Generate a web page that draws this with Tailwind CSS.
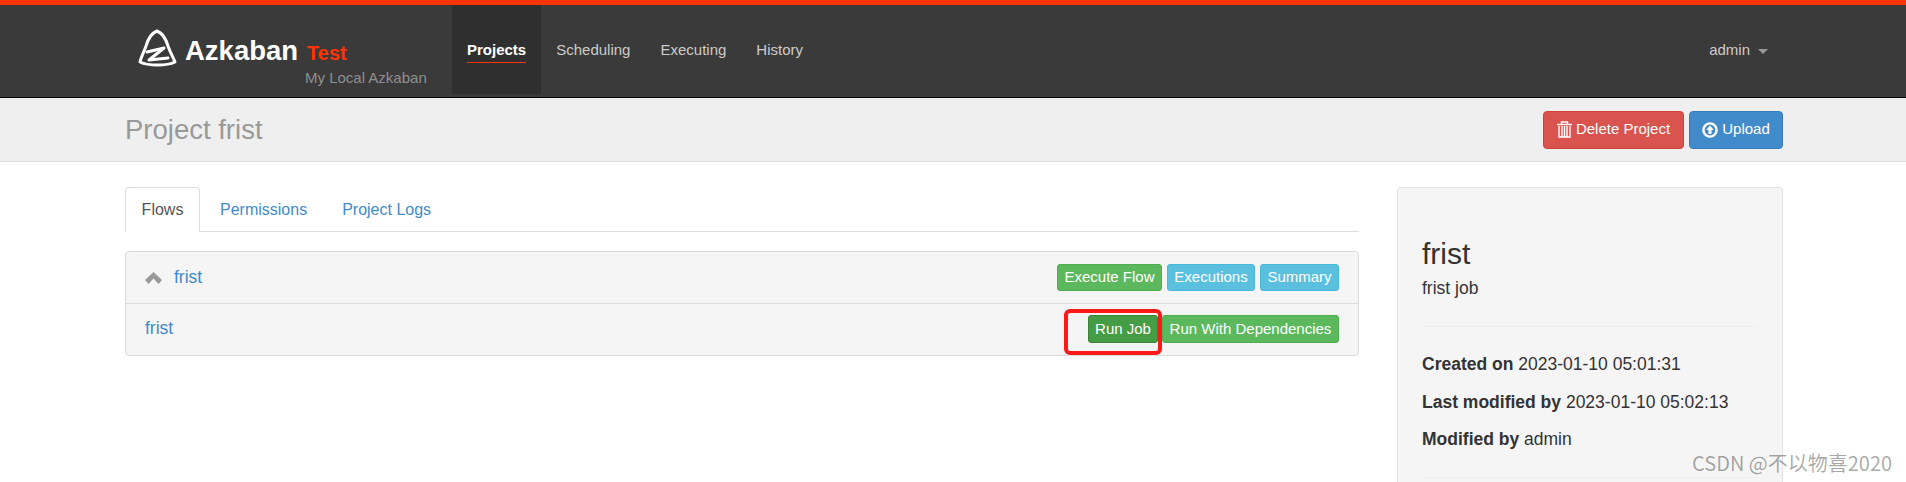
<!DOCTYPE html>
<html lang="en">
    <head>
        <title>Azkaban</title>
        <meta charset="UTF-8" />
        <script src="https://cdn.jsdelivr.net/npm/@tailwindcss/browser@4"></script>
    </head>
    <body class="relative h-[482px] overflow-hidden bg-white font-['Liberation_Sans',Arial,sans-serif] text-[17.5px] text-[#333]">
        <!-- top nav -->
        <header class="h-[98px] border-t-[5px] border-b border-t-[#ff3402] border-b-black bg-[#3a3a3a]">
            <div class="flex h-full pl-[125px] pr-[138px]">
                <div class="flex w-[327px] shrink-0">
                    <svg class="ml-[12px] mt-[24px] h-[38px] w-[40px]" viewBox="0 0 40 38" fill="none" stroke="#fff" stroke-width="3" stroke-linejoin="round" stroke-linecap="round">
                        <path d="M20 2C15 4 11 10 9 17C7 23 4 28 3 33C11 37 30 37 38 33C36 28 33 23 31 17C29 10 25 4 20 2Z" />
                        <path d="M10 23L27 19L12 31L31 29" />
                    </svg>
                    <div class="ml-[8px]">
                        <div class="mt-[28px] flex items-baseline">
                            <span class="text-[27.5px] leading-[36px] font-bold text-white">Azkaban</span>
                            <span class="ml-[9px] text-[20px] leading-[36px] font-bold text-[#ff3402]">Test</span>
                        </div>
                        <div class="ml-[120px] mt-[-2px] text-[15px] leading-[18px] whitespace-nowrap text-[#8f8f8f]">My Local Azkaban</div>
                    </div>
                </div>
                <nav class="flex h-[89px] text-[15px] text-[#ccc]">
                    <a class="bg-[#2f2f2f] px-[15px] pt-[35px] font-bold text-white">
                        <span class="block border-b border-[#ff3402] pb-[2px] leading-[20px]">Projects</span>
                    </a>
                    <a class="px-[15px] pt-[35px] leading-[20px]">Scheduling</a>
                    <a class="px-[15px] pt-[35px] leading-[20px]">Executing</a>
                    <a class="px-[15px] pt-[35px] leading-[20px]">History</a>
                </nav>
                <div class="ml-auto flex h-[91px] items-center text-[15px] text-[#ccc]">
                    admin
                    <span class="ml-[8px] mt-[1px] border-x-[5px] border-t-[5px] border-x-transparent border-t-[#999]"></span>
                </div>
            </div>
        </header>

        <!-- project header -->
        <div class="flex h-[64px] items-center justify-between border-b border-[#ddd] bg-[#efefef] pl-[125px] pr-[123px]">
            <h1 class="text-[27.5px] text-[#999]">Project frist</h1>
            <div class="flex gap-[5px] text-[15px] text-white">
                <button class="flex h-[38px] w-[141px] items-center justify-center gap-[4px] rounded border border-[#d43f3a] bg-[#d9534f]">
                    <svg class="h-[17px] w-[15px]" viewBox="0 0 15 17" fill="none" stroke="#fff">
                        <path d="M0 3.5H15M4.5 3V1H10.5V3" stroke-width="1.4" />
                        <path d="M2 5V16H13V5" stroke-width="1.4" />
                        <path d="M5 5V16M7.5 5V16M10 5V16" stroke-width="1.4" />
                    </svg>
                    Delete Project
                </button>
                <button class="flex h-[38px] w-[94px] items-center justify-center gap-[4px] rounded border border-[#357ebd] bg-[#428bca]">
                    <svg class="h-[16px] w-[16px]" viewBox="0 0 16 16">
                        <circle cx="8" cy="8" r="6.6" fill="none" stroke="#fff" stroke-width="2.4" />
                        <path d="M8 3.4L11.8 8H9.5V12H6.5V8H4.2Z" fill="#fff" />
                    </svg>
                    Upload
                </button>
            </div>
        </div>

        <!-- content -->
        <main class="flex gap-[38px] pl-[125px] pr-[123px] pt-[25px]">
            <div class="w-[1234px] shrink-0">
                <div class="flex h-[45px] border-b border-[#ddd] text-[16px] text-[#428bca]">
                    <a class="h-[45px] w-[75px] rounded-t border border-b-0 border-[#ddd] bg-white pt-[12px] text-center leading-[20px] text-[#555]">Flows</a>
                    <a class="ml-[20px] pt-[13px] leading-[20px]">Permissions</a>
                    <a class="ml-[35px] pt-[13px] leading-[20px]">Project Logs</a>
                </div>
                <div class="mt-[19px] h-[105px] rounded border border-[#ddd] bg-[#f5f5f5]">
                    <div class="flex h-[52px] items-center border-b border-[#ddd] pl-[19px] pr-[19px]">
                        <svg class="h-[12px] w-[17px]" viewBox="0 0 17 12" fill="#999">
                            <path d="M8.5 0L17 8L13.5 12L8.5 6.5L3.5 12L0 8Z" />
                        </svg>
                        <a class="ml-[12px] text-[#428bca]">frist</a>
                        <div class="ml-auto flex gap-[5px] text-[15px] text-white">
                            <button class="h-[27px] w-[105px] rounded-[3px] border border-[#4cae4c] bg-[#5cb85c]">Execute Flow</button>
                            <button class="h-[27px] w-[88px] rounded-[3px] border border-[#46b8da] bg-[#5bc0de]">Executions</button>
                            <button class="h-[27px] w-[79px] rounded-[3px] border border-[#46b8da] bg-[#5bc0de]">Summary</button>
                        </div>
                    </div>
                    <div class="flex h-[51px] items-center pl-[19px] pr-[19px]">
                        <a class="-mt-[2px] text-[#428bca]">frist</a>
                        <div class="ml-auto -mt-[1px] flex gap-[4px] text-[15px] text-white">
                            <button class="h-[28px] w-[70px] rounded-[3px] border border-[#398439] bg-[#449d44]">Run Job</button>
                            <button class="h-[28px] w-[177px] rounded-[3px] border border-[#4cae4c] bg-[#5cb85c]">Run With Dependencies</button>
                        </div>
                    </div>
                </div>
            </div>

            <aside class="h-[400px] w-[386px] shrink-0 rounded border border-[#e3e3e3] bg-[#f5f5f5] px-[24px] pt-[48px]">
                <h3 class="text-[30px] leading-[36px]">frist</h3>
                <p class="mt-[4px] leading-[24px]">frist job</p>
                <hr class="mt-[26px] border-[#eee]" />
                <p class="mt-[25px] leading-[24px]"><b>Created on</b> 2023-01-10 05:01:31</p>
                <p class="mt-[14px] leading-[24px]"><b>Last modified by</b> 2023-01-10 05:02:13</p>
                <p class="mt-[13px] leading-[24px]"><b>Modified by</b> admin</p>
                <hr class="mt-[26px] border-[#eee]" />
            </aside>
        </main>

        <!-- annotation drawn on the screenshot -->
        <div class="absolute left-[1064px] top-[309px] h-[46px] w-[98px] rounded-[6px] border-[4px] border-[#fb1a1a]"></div>
        <!-- watermark -->
        <div class="absolute left-[1692px] top-[450px] font-['Noto_Sans_CJK_SC',sans-serif] text-[20px] leading-[26px] whitespace-nowrap text-black/35">CSDN @不以物喜2020</div>
    </body>
</html>
